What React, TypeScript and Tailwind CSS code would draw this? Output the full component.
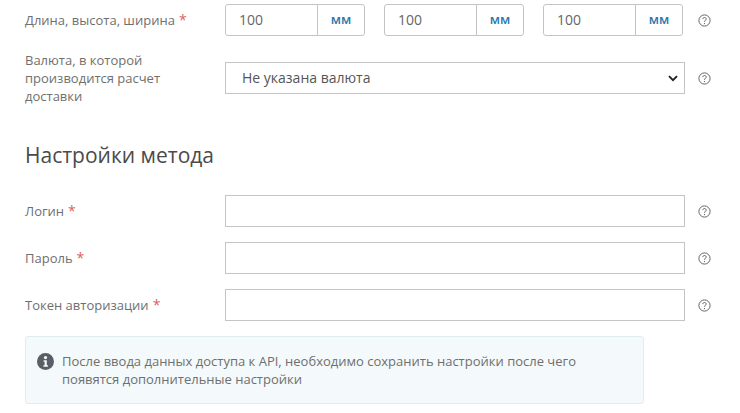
const FONT = "font-['Open_Sans',sans-serif]";

function HelpIcon() {
  return (
    <svg width="13" height="13" viewBox="0 0 13 13" fill="none" className="shrink-0 text-[#555555]">
      <circle cx="6.5" cy="6.5" r="5.6" stroke="currentColor" strokeWidth="0.9" />
      <path d="M4.8 5.1c0-1 .8-1.6 1.7-1.6s1.7.6 1.7 1.5c0 1.3-1.7 1.4-1.7 2.8" stroke="currentColor" strokeWidth="0.9" />
      <circle cx="6.5" cy="9.6" r="0.6" fill="currentColor" />
    </svg>
  );
}

function Label({ children, required }: { children: React.ReactNode; required?: boolean }) {
  return (
    <div className="w-[200px] shrink-0 pr-6 text-[13px] leading-[18px] text-[#6f6f6f]">
      {children}
      {required && <span className="ml-1 text-sm leading-none text-[#e0605c]">*</span>}
    </div>
  );
}

function SizeInput() {
  return (
    <div className="flex h-8 flex-1 rounded-[3px] border border-[#c4c4c4] bg-white">
      <div className="flex flex-1 items-center pl-[13px] text-sm text-[#666666]">100</div>
      <div className="flex w-[47px] items-center justify-center border-l border-[#c4c4c4] text-[13px] font-semibold text-[#2b78ab]">
        мм
      </div>
    </div>
  );
}

function TextRow({ label }: { label: string }) {
  return (
    <div className="flex items-center">
      <Label required>{label}</Label>
      <input type="text" className="h-8 w-[460px] border border-[#c4c4c4] bg-white" />
      <div className="ml-[13px]">
        <HelpIcon />
      </div>
    </div>
  );
}

export default function App() {
  return (
    <div className={`${FONT} h-[413px] w-[740px] overflow-hidden bg-white pl-[25px] pt-1`}>
      <div className="flex items-center">
        <Label required>Длина, высота, ширина</Label>
        <div className="flex w-[458px] gap-[19px]">
          <SizeInput />
          <SizeInput />
          <SizeInput />
        </div>
        <div className="ml-[15px]">
          <HelpIcon />
        </div>
      </div>

      <div className="mt-[15px] flex items-center">
        <Label>Валюта, в которой производится расчет доставки</Label>
        <div className="flex h-8 w-[460px] items-center justify-between border border-[#c4c4c4] bg-white pl-4 pr-[5px] text-sm text-[#555555]">
          <span>Не указана валюта</span>
          <svg width="10" height="7" viewBox="0 0 10 7" fill="none" className="mr-[1px]">
            <path d="M1 1.2l4 4 4-4" stroke="#222222" strokeWidth="1.9" />
          </svg>
        </div>
        <div className="ml-[13px]">
          <HelpIcon />
        </div>
      </div>

      <h2 className="mt-[35px] text-[21px] leading-[30px] text-[#4a4a4a]">Настройки метода</h2>

      <div className="mt-[25px] flex flex-col gap-[15px]">
        <TextRow label="Логин" />
        <TextRow label="Пароль" />
        <TextRow label="Токен авторизации" />
      </div>

      <div className="mt-[15px] flex h-[68px] w-[619px] gap-2 rounded-[3px] border border-[#e0ecef] bg-[#f4fafb] pl-[11px] pr-[60px] pt-[15px]">
        <svg width="17" height="17" viewBox="0 0 17 17" className="mt-px shrink-0">
          <circle cx="8.5" cy="8.5" r="8.5" fill="#5a5f66" />
          <circle cx="8.5" cy="4.6" r="1.6" fill="#f4fafb" />
          <path d="M6.6 7.2h3.2v5h1.1v1.5H6.4v-1.5h1.2V8.7h-1z" fill="#f4fafb" />
        </svg>
        <p className="text-[13px] leading-[18px] text-[#6f6f6f]">
          После ввода данных доступа к API, необходимо сохранить настройки после чего появятся дополнительные настройки
        </p>
      </div>
    </div>
  );
}
